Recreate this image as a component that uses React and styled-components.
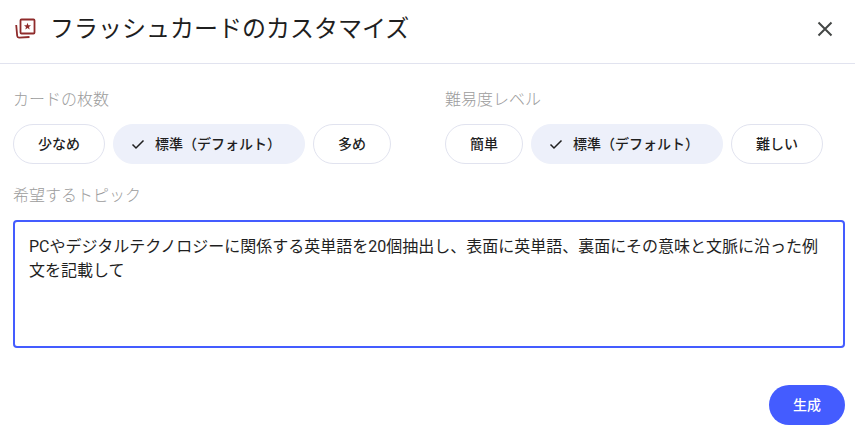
import React from "react";
import styled, { createGlobalStyle } from "styled-components";

const Global = createGlobalStyle`
  html, body { margin: 0; padding: 0; background: #fff; }
`;
const FONT = `Roboto, "Noto Sans CJK JP", sans-serif`;

const Dialog = styled.div`
  width: 855px; height: 441px; display: flex; flex-direction: column; background: #fff; font-family: ${FONT};
  overflow: hidden;
`;
const Header = styled.header`
  height: 57px; box-sizing: content-box; border-bottom: 1px solid #e1e3ef;
  display: flex; align-items: center; padding: 0 20px 6px 14px;
`;
const TitleIcon = styled.svg`
  width: 22px; height: 22px; flex: none; margin-right: 14px;
`;
const Title = styled.h1`
  flex: 1; margin: 0; font-size: 24px; font-weight: 400; line-height: 32px; color: #1f1f1f;
`;
const CloseButton = styled.button`
  width: 20px; height: 20px; padding: 0; border: 0; background: none; display: flex;
  align-items: center; justify-content: center; color: #444746;
`;
const Body = styled.div`
  flex: 1; padding: 24px 10px 16px 13px; display: flex; flex-direction: column;
`;
const Columns = styled.div`
  display: grid; grid-template-columns: 432px 1fr;
`;
const Label = styled.div`
  font-size: 16px; line-height: 24px; color: #9c9c9c; font-weight: 300;
`;
const Chips = styled.div`
  display: flex; gap: 8px; margin-top: 12px;
`;
const Chip = styled.button`
  height: 40px; box-sizing: border-box; border-radius: 20px;
  padding: 0 ${p => (p.$selected ? 23 : 24)}px 1px ${p => (p.$selected ? 17 : 24)}px;
  font: 500 14px/20px ${FONT}; color: #1f1f1f; display: flex; align-items: center; gap: 10px;
  border: 1px solid ${p => (p.$selected ? "#edf0fa" : "#e1e3ef")};
  background: ${p => (p.$selected ? "#edf0fa" : "#fff")};
  white-space: nowrap;
`;
const TopicLabel = styled(Label)`
  margin-top: 20px;
`;
const TopicInput = styled.div`
  margin-top: 12px; height: 128px; box-sizing: border-box; border: 2px solid #445cff; border-radius: 4px;
  padding: 13px 14px; font-size: 16px; line-height: 24px; color: #1f1f1f; font-weight: 400;
`;
const Footer = styled.div`
  margin-top: auto; display: flex; justify-content: flex-end;
`;
const Generate = styled.button`
  width: 76px; height: 40px; border: 0; border-radius: 20px; background: #445cff; color: #fff;
  font: 500 14px/20px ${FONT};
`;

const Check = () => (
  <svg width="14" height="14" viewBox="0 0 14 14" fill="none" stroke="#1f1f1f" strokeWidth="1.5">
    <path d="M1.5 7.5 5 11 12.5 3.5" />
  </svg>
);

export default function App() {
  return (
    <Dialog>
      <Global />
      <Header>
        <TitleIcon viewBox="0 0 22 22" fill="none" stroke="#8f2b2b">
          <rect x="6.5" y="1.5" width="14" height="14" rx="1" strokeWidth="1.8" />
          <path d="M2.2 7 L3.2 18 Q3.4 19.7 5.2 19.6 L15.5 19" strokeWidth="1.8" />
          <path d="M13.5 4.8l.9 2.4 2.6.1-2 1.6.7 2.5-2.2-1.4-2.2 1.4.7-2.5-2-1.6 2.6-.1z" fill="#8f2b2b" stroke="none" />
        </TitleIcon>
        <Title>フラッシュカードのカスタマイズ</Title>
        <CloseButton aria-label="閉じる">
          <svg width="16" height="16" viewBox="0 0 16 16" fill="none" stroke="currentColor" strokeWidth="2">
            <path d="M1.5 1.5 14.5 14.5M14.5 1.5 1.5 14.5" />
          </svg>
        </CloseButton>
      </Header>
      <Body>
        <Columns>
          <div>
            <Label>カードの枚数</Label>
            <Chips>
              <Chip>少なめ</Chip>
              <Chip $selected><Check />標準（デフォルト）</Chip>
              <Chip>多め</Chip>
            </Chips>
          </div>
          <div>
            <Label>難易度レベル</Label>
            <Chips>
              <Chip>簡単</Chip>
              <Chip $selected><Check />標準（デフォルト）</Chip>
              <Chip>難しい</Chip>
            </Chips>
          </div>
        </Columns>
        <TopicLabel>希望するトピック</TopicLabel>
        <TopicInput>PCやデジタルテクノロジーに関係する英単語を20個抽出し、表面に英単語、裏面にその意味と文脈に沿った例文を記載して</TopicInput>
        <Footer>
          <Generate>生成</Generate>
        </Footer>
      </Body>
    </Dialog>
  );
}
